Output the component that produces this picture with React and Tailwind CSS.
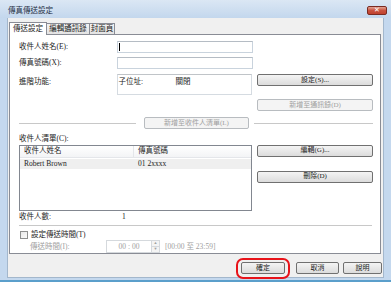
import React from "react";

const font = "font-['Liberation_Serif','Noto_Sans_CJK_TC',serif]";

function Btn({ children, disabled, className = "" }) {
  return (
    <div
      className={
        "h-[12px] flex items-center justify-center rounded-[2px] border text-[7px] leading-none " +
        (disabled
          ? "border-[#b8bcc0] bg-[#f4f4f4] text-[#a0a0a0] "
          : "border-[#707070] bg-gradient-to-b from-[#f4f4f4] to-[#dcdcdc] text-[#222] ") +
        className
      }
    >
      {children}
    </div>
  );
}

function Input({ className = "", children }) {
  return (
    <div
      className={
        "h-[12px] border border-[#c9d3dd] border-t-[#b5bcc4] bg-white " + className
      }
    >
      {children}
    </div>
  );
}

export default function App() {
  return (
    <div
      className={
        "w-[391px] h-[284px] bg-white relative overflow-hidden text-[7.5px] leading-none text-[#222] " +
        font
      }
    >
      <div className="w-[391px] h-[282px] flex flex-col bg-[#c4d8ee] border-b-[2px] border-[#5b9fcb] rounded-t-[3px]">
        {/* title bar */}
        <div className="h-[18px] flex items-center justify-between pl-[8px] pr-[4px] bg-gradient-to-b from-[#dbe7f4] to-[#c3d7ed]">
          <span className="text-[#1e2e44] text-[7.5px] mt-[4px]">傳真傳送設定</span>
          <div className="w-[20px] h-[9px] mt-[3px] rounded-[2px] border border-[#7a2b22] bg-gradient-to-b from-[#e2a394] via-[#c9523f] to-[#c0412e] flex items-center justify-center text-white text-[7px] font-bold font-['DejaVu_Sans',sans-serif]">
            ✕
          </div>
        </div>
        {/* client */}
        <div className="flex-1 mx-[7px] mb-[2px] bg-[#f0f0f0] flex flex-col border border-[#a3b7cc] border-t-0">
          {/* tabs */}
          <div className="mt-[3px] ml-[1px] flex items-end h-[13px]">
            <div className="h-[13px] w-[38px] bg-white border border-[#898c95] border-b-0 flex items-center justify-center relative z-10 mb-[-1px] pb-[1px]">
              傳送設定
            </div>
            <div className="h-[11px] w-[43px] bg-gradient-to-b from-[#f2f2f2] to-[#e3e3e3] border border-[#898c95] border-l-0 border-b-0 flex items-center justify-center">
              編輯通訊錄
            </div>
            <div className="h-[11px] w-[25px] bg-gradient-to-b from-[#f2f2f2] to-[#e3e3e3] border border-[#898c95] border-l-0 border-b-0 flex items-center justify-center">
              封面頁
            </div>
          </div>
          {/* panel */}
          <div className="ml-[1px] mr-[2px] h-[220px] bg-white border border-[#898c95] flex flex-col pl-[9px] pr-[7px]">
            {/* row 1 */}
            <div className="flex items-center mt-[6px]">
              <div className="w-[98px]">收件人姓名(E):</div>
              <Input className="w-[136px] border-[#a9c6e3] border-t-[#7da2ce] flex items-center pl-[1px]">
                <div className="w-[1px] h-[8px] bg-black" />
              </Input>
            </div>
            <div className="flex items-center mt-[4px]">
              <div className="w-[98px]">傳真號碼(X):</div>
              <Input className="w-[136px]" />
            </div>
            <div className="flex mt-[5px]">
              <div className="w-[98px] pt-[4px]">進階功能:</div>
              <div className="w-[136px] h-[21px] border border-[#d5dbe1] border-t-[#c0c4c8] bg-white flex pt-[3px] pl-[1px]">
                <span className="w-[57px]">子位址:</span>
                <span>關閉</span>
              </div>
              <div className="ml-[5px] flex flex-col gap-[13px]">
                <Btn className="w-[116px]">設定(S)...</Btn>
                <Btn className="w-[116px]" disabled>
                  新增至通訊錄(D)
                </Btn>
              </div>
            </div>
            {/* separator with button */}
            <div className="flex items-center mt-[6px]">
              <div className="w-[117px] h-[1px] bg-[#c8c8c8]" />
              <Btn disabled className="w-[105px] ml-[8px]">
                新增至收件人清單(L)
              </Btn>
              <div className="flex-1 h-[1px] bg-[#c8c8c8] ml-[5px]" />
            </div>
            <div className="mt-[5px] h-[10px] flex items-center">收件人清單(C):</div>
            <div className="flex mt-[2px]">
              <div className="w-[234px] h-[66px] border border-[#828790] bg-white flex flex-col">
                <div className="h-[12px] flex items-center bg-gradient-to-b from-[#ffffff] to-[#f3f4f6] border-b border-[#e4e6ea]">
                  <div className="w-[114px] pl-[4px] h-full flex items-center border-r border-[#e4e6ea]">收件人姓名</div>
                  <div className="pl-[4px]">傳真號碼</div>
                </div>
                <div className="h-[10px] flex items-center bg-[#efefef] mt-[1px]">
                  <div className="w-[114px] pl-[4px]">Robert Brown</div>
                  <div className="pl-[4px]">01 2xxxx</div>
                </div>
              </div>
              <div className="ml-[5px] flex flex-col gap-[14px]">
                <Btn className="w-[116px]">編輯(G)...</Btn>
                <Btn className="w-[116px]">刪除(D)</Btn>
              </div>
            </div>
            <div className="flex items-center mt-[2px] h-[10px]">
              <div className="w-[103px]">收件人數:</div>
              <div>1</div>
            </div>
            <div className="h-[1px] bg-[#c8c8c8] mt-[4px] mr-[1px]" />
            <div className="flex items-center mt-[4px] h-[10px]">
              <div className="w-[8px] h-[8px] border border-[#8e8f8f] bg-gradient-to-br from-[#e8e8e8] to-[#fafafa] ml-[1px]" />
              <div className="ml-[3px]">設定傳送時間(T)</div>
            </div>
            <div className="flex items-center mt-[1px] h-[13px] text-[#a0a0a0]">
              <div className="w-[87px] pl-[11px]">傳送時間(I):</div>
              <div className="w-[46px] h-[13px] border border-[#d5d9dd] bg-white flex items-center justify-center">
                00 : 00
              </div>
              <div className="w-[8px] h-[13px] border border-[#d5d9dd] border-l-0 flex flex-col bg-[#f4f4f4]">
                <div className="flex-1 flex items-center justify-center text-[4px] border-b border-[#d5d9dd]">▲</div>
                <div className="flex-1 flex items-center justify-center text-[4px]">▼</div>
              </div>
              <div className="ml-[5px]">[00:00 至 23:59]</div>
            </div>
          </div>
          {/* footer */}
          <div className="flex mt-[8px] ml-[233px] relative">
            <Btn className="w-[44px]">確定</Btn>
            <Btn className="w-[43px] ml-[11px]">取消</Btn>
            <Btn className="w-[39px] ml-[4px]">說明</Btn>
            <div className="absolute left-[-5px] top-[-4px] w-[54px] h-[21px] rounded-[7px] border-[2px] border-[#e8131a]" />
          </div>
        </div>
      </div>
    </div>
  );
}
